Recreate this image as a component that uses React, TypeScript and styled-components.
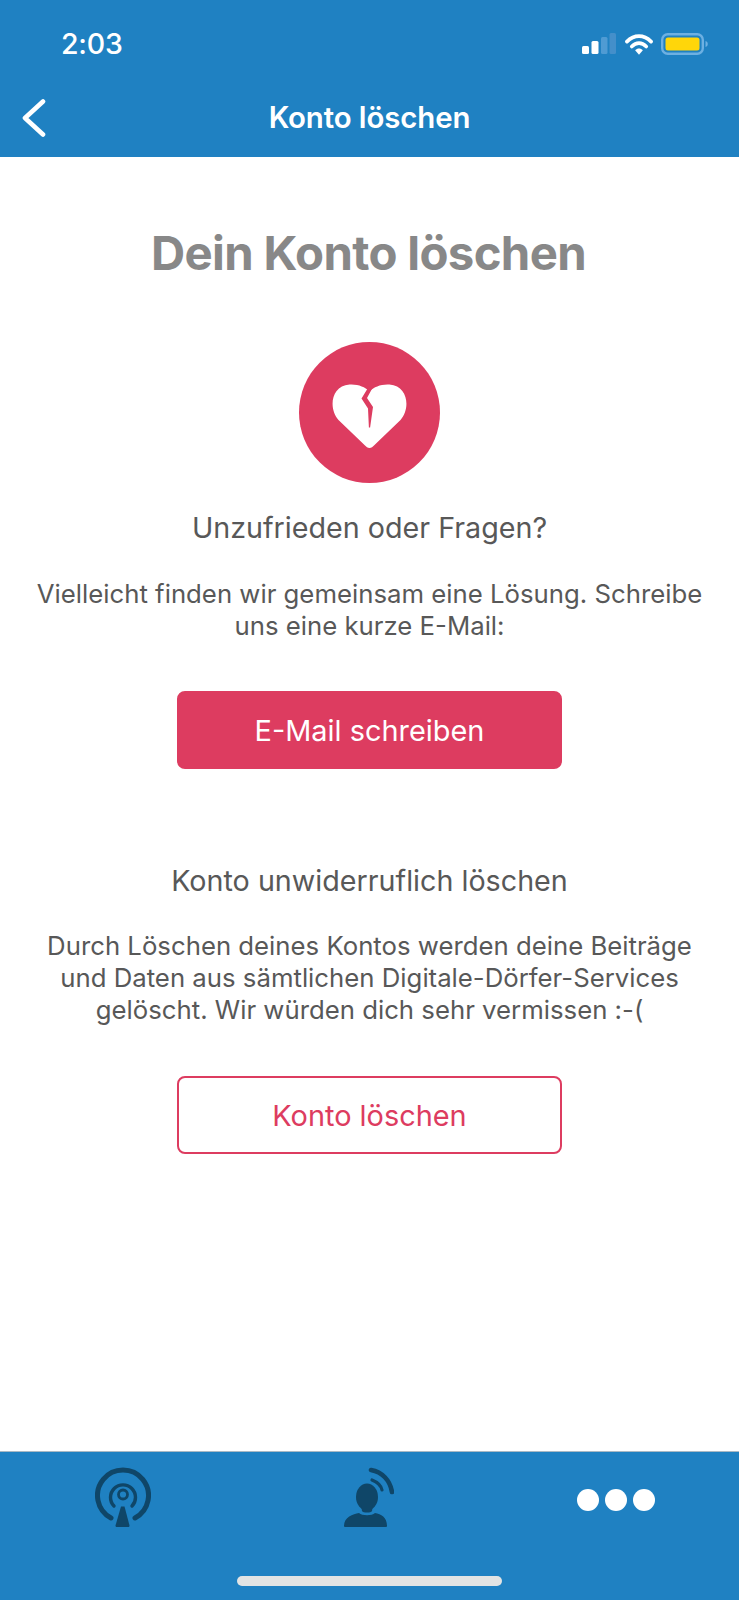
import React from "react";
import styled, { createGlobalStyle } from "styled-components";

const Global = createGlobalStyle`
  html, body { margin: 0; padding: 0; background: #fff; }
  * { box-sizing: border-box; }
`;

const Screen = styled.div`
  width: 739px;
  height: 1600px;
  display: flex;
  flex-direction: column;
  font-family: Inter, "Liberation Sans", sans-serif;
  background: #fff;
  overflow: hidden;
`;

const TopBar = styled.header`
  height: 157px;
  flex: none;
  background: #1f81c2;
  color: #fff;
  display: flex;
  flex-direction: column;
`;

const StatusBar = styled.div`
  height: 88px;
  padding: 0 30px 0 61px;
  display: flex;
  align-items: center;
  justify-content: space-between;
`;

const Clock = styled.span`
  font-size: 28.5px;
  line-height: 34px;
  font-weight: 500;
  letter-spacing: -0.2px;
`;

const StatusIcons = styled.div`
  display: flex;
  align-items: center;
  gap: 8px;
`;

const NavBar = styled.nav`
  height: 59px;
  position: relative;
  display: flex;
  align-items: center;
  justify-content: center;
`;

const BackIcon = styled.svg`
  position: absolute;
  left: 21px;
  top: 11px;
`;

const NavTitle = styled.h1`
  margin: 0;
  font-size: 29.4px;
  font-weight: 600;
  letter-spacing: -0.1px;
`;

const Main = styled.main`
  flex: 1;
  display: flex;
  flex-direction: column;
  align-items: center;
  text-align: center;
  padding: 70px 30px 0;
`;

const PageTitle = styled.h2`
  margin: 0 2px 63px 0;
  font-size: 47.3px;
  line-height: 52px;
  font-weight: 700;
  letter-spacing: -0.65px;
  color: #888;
`;

const HeartBadge = styled.div`
  width: 141px;
  height: 141px;
  padding: 7px 1px 0 0;
  border-radius: 50%;
  background: #dd3c60;
  display: flex;
  align-items: center;
  justify-content: center;
`;

const Heading = styled.h3<{ $top: number }>`
  margin: ${(p) => p.$top}px 0 0;
  font-size: 28.7px;
  line-height: 34px;
  font-weight: 400;
  color: #585858;
`;

const Paragraph = styled.p<{ $width: number; $top: number }>`
  margin: ${(p) => p.$top}px 0 0;
  width: ${(p) => p.$width}px;
  font-size: 25.75px;
  line-height: 32px;
  font-weight: 400;
  color: #585858;
`;

const Button = styled.button<{ $outline?: boolean; $top: number }>`
  width: 385px;
  height: 78px;
  margin-top: ${(p) => p.$top}px;
  border-radius: 8px;
  border: 2px solid #dd3c60;
  background: ${(p) => (p.$outline ? "#fff" : "#dd3c60")};
  color: ${(p) => (p.$outline ? "#dd3c60" : "#fff")};
  font-family: inherit;
  font-size: 28.9px;
  font-weight: 400;
`;

const TabBar = styled.footer`
  height: 149px;
  flex: none;
  background: #1f81c2;
  border-top: 1px solid #a9b9c4;
  display: grid;
  grid-template-columns: 246px 246px 247px;
  position: relative;
`;

const Tab = styled.div`
  display: flex;
  justify-content: center;
  padding-top: 15px;
`;

const Dots = styled.div`
  display: flex;
  gap: 6px;
  margin-top: 22px;
  height: 22px;
`;

const Dot = styled.span`
  width: 22px;
  height: 22px;
  border-radius: 50%;
  background: #fff;
`;

const HomeIndicator = styled.div`
  position: absolute;
  left: 237px;
  top: 124px;
  width: 265px;
  height: 10px;
  border-radius: 5px;
  background: #e2e4e4;
`;

const dark = "#0f4668";

export default function App() {
  return (
    <Screen>
      <Global />
      <TopBar>
        <StatusBar>
          <Clock>2:03</Clock>
          <StatusIcons>
            <svg width="35" height="22" viewBox="0 0 35 22">
              <rect x="0" y="13" width="7" height="8" rx="1.5" fill="#fff" />
              <rect x="9.5" y="8" width="7" height="13" rx="1.5" fill="#fff" />
              <rect x="19" y="4" width="6.5" height="17" rx="1.5" fill="#4f9bd3" />
              <rect x="27.5" y="0" width="6.5" height="21" rx="1.5" fill="#448fca" />
            </svg>
            <svg width="28" height="23" viewBox="0 0 29 23">
              <path d="M2 8.5C9.5 1 19.5 1 27 8.5" fill="none" stroke="#fff" strokeWidth="3.8" strokeLinecap="round" />
              <path d="M7 13.5C11.5 9 17.5 9 22 13.5" fill="none" stroke="#fff" strokeWidth="3.8" strokeLinecap="round" />
              <path d="M10.5 17.5C13 15 16 15 18.5 17.5L14.5 22Z" fill="#fff" />
            </svg>
            <svg width="48" height="22" viewBox="0 0 48 22">
              <rect x="1.2" y="1.2" width="40.6" height="19.6" rx="5.5" fill="none" stroke="#6db0e2" strokeWidth="2.4" />
              <rect x="4.5" y="4.5" width="34" height="13" rx="2.5" fill="#ffd60a" />
              <path d="M44.5 8C47.5 8.6 47.5 13.4 44.5 14Z" fill="#6db0e2" />
            </svg>
          </StatusIcons>
        </StatusBar>
        <NavBar>
          <BackIcon width="26" height="38" viewBox="0 0 26 38">
            <path d="M22 2.5L4 19L22 35.5" fill="none" stroke="#fff" strokeWidth="4.6" strokeLinecap="round" strokeLinejoin="round" />
          </BackIcon>
          <NavTitle>Konto löschen</NavTitle>
        </NavBar>
      </TopBar>
      <Main>
        <PageTitle>Dein Konto löschen</PageTitle>
        <HeartBadge>
          <svg width="77" height="64" viewBox="0 0 76 64">
            <path d="M38 64C36 64 35 63 33 61L7 36C-3 25-1 2 18 .5C27 0 33 3 38 7C43 3 49 0 58 .5C77 2 79 25 69 36L43 61C41 63 40 64 38 64Z" fill="#fff" />
            <path d="M37 3L30 14.5L36.5 24.5L37.4 43.5H38.6L41.5 23L35.5 14L41.5 3Z" fill="#dd3c60" />
          </svg>
        </HeartBadge>
        <Heading $top={28}>Unzufrieden oder Fragen?</Heading>
        <Paragraph $width={680} $top={33}>Vielleicht finden wir gemeinsam eine Lösung. Schreibe uns eine kurze E-Mail:</Paragraph>
        <Button $top={49}>E-Mail schreiben</Button>
        <Heading $top={95}>Konto unwiderruflich löschen</Heading>
        <Paragraph $width={670} $top={32}>Durch Löschen deines Kontos werden deine Beiträge und Daten aus sämtlichen Digitale-Dörfer-Services gelöscht. Wir würden dich sehr vermissen :-(</Paragraph>
        <Button $outline $top={50}>Konto löschen</Button>
      </Main>
      <TabBar>
        <Tab>
          <svg width="56" height="60" viewBox="0 0 56 60">
            <g fill="none" stroke={dark} strokeLinecap="round">
              <path d="M16 51A25.5 25.5 0 1 1 40 51" strokeWidth="5" />
              <path d="M19 39A12.5 12.5 0 1 1 37 39" strokeWidth="3.4" />
              <circle cx="28" cy="27.5" r="4.5" strokeWidth="2.8" />
            </g>
            <path d="M26 39.5H29.5L34.5 58.5C34.5 59.5 34 60 33 60H22C21 60 20.5 59.5 20.5 58.5Z" fill={dark} />
          </svg>
        </Tab>
        <Tab>
          <svg width="50" height="60" viewBox="0 0 50 60">
            <ellipse cx="23" cy="30" rx="11" ry="13.5" fill={dark} />
            <path d="M17 38H29L28 44C27 46 19 46 18 44Z" fill={dark} />
            <path d="M0 59C0 50 9 47 15 46C18 49 28 49 31 46C37 47 43 50 43 59C43 60 42 60 41 60H2C1 60 0 60 0 59Z" fill={dark} />
            <g fill="none" stroke={dark} strokeLinecap="round">
              <path d="M27 3C38 5 46 13 48 25" strokeWidth="4.6" />
              <path d="M28 13C33 15 37 18 38 23" strokeWidth="3.2" />
            </g>
          </svg>
        </Tab>
        <Tab>
          <Dots>
            <Dot />
            <Dot />
            <Dot />
          </Dots>
        </Tab>
        <HomeIndicator />
      </TabBar>
    </Screen>
  );
}
